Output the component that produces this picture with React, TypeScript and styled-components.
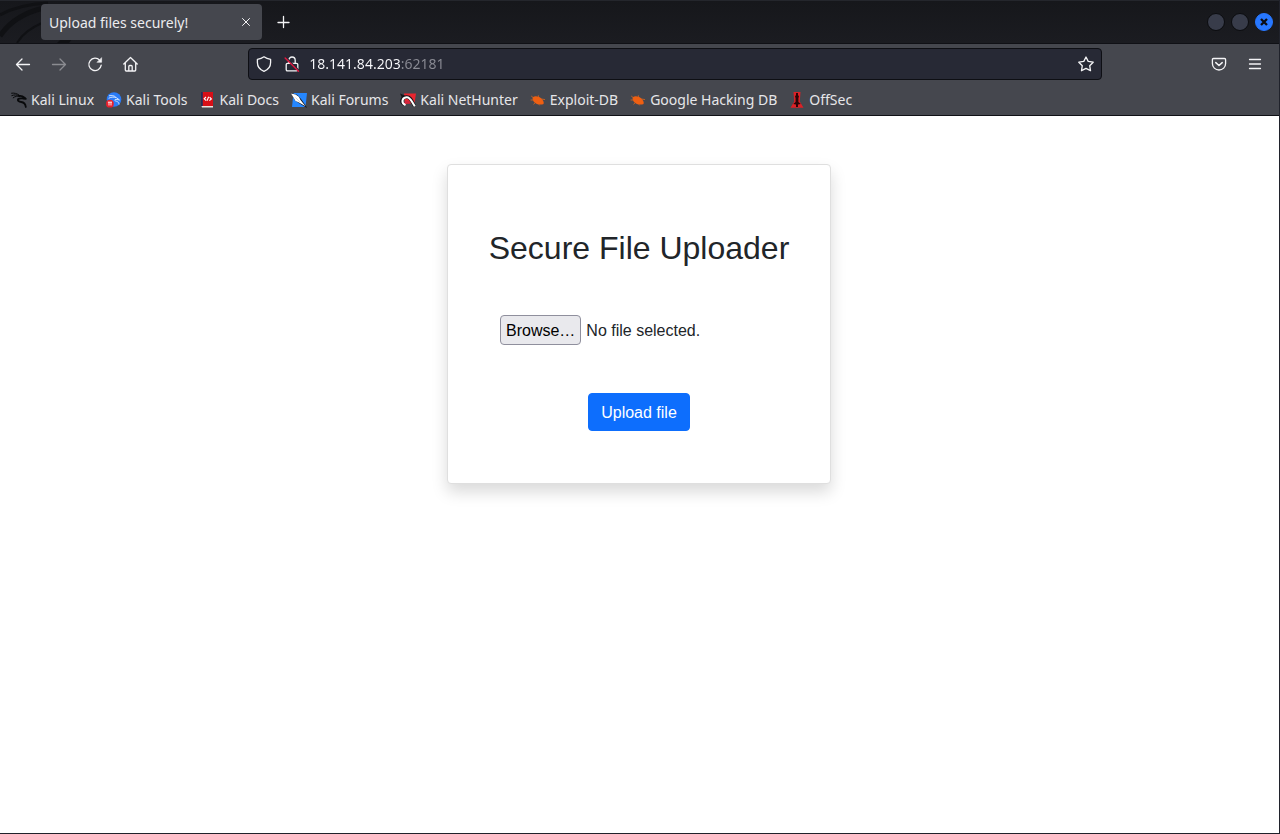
import React, { useState } from "react";
import styled, { createGlobalStyle } from "styled-components";

const GlobalStyle = createGlobalStyle`
  * { box-sizing: border-box; }
  body { margin: 0; background: #fff; }
`;

const uiFont = `"Noto Sans", sans-serif`;
const pageFont = `"Liberation Sans", Arial, sans-serif`;

const Window = styled.div`
  min-height: 100vh;
  display: flex;
  flex-direction: column;
  border-right: 1px solid #20222b;
  border-bottom: 1px solid #20222b;
  background: #fff;
  font-family: ${uiFont};
`;

const TitleBar = styled.header`
  position: relative;
  display: flex;
  align-items: center;
  height: 44px;
  padding: 0 6px 0 41px;
  border-top: 1px solid #24262c;
  border-bottom: 1px solid #101116;
  background: linear-gradient(#16171b, #1b1c21);
`;

const TitleArt = styled.svg`
  position: absolute;
  left: 0;
  top: 0;
`;

const Tab = styled.div`
  position: relative;
  display: flex;
  align-items: center;
  justify-content: space-between;
  width: 221px;
  height: 36px;
  padding: 0 8px;
  border-radius: 4px;
  background: #45474e;
  color: #ececee;
  font-size: 14px;
  line-height: 20px;
`;

const TabTitle = styled.span`
  padding-top: 2px;
`;

const IconButton = styled.button<{ $size?: number }>`
  display: flex;
  align-items: center;
  justify-content: center;
  flex: none;
  width: ${(p) => p.$size ?? 36}px;
  height: ${(p) => p.$size ?? 36}px;
  padding: 0;
  border: 0;
  border-radius: 4px;
  background: none;
  color: #f4f4f6;
  &:disabled { color: #8b8c91; }
`;

const NewTab = styled(IconButton)`
  margin-left: 4px;
`;

const WindowControls = styled.div`
  display: flex;
  gap: 6px;
  margin-left: auto;
`;

const ControlDot = styled.button<{ $close?: boolean }>`
  display: flex;
  align-items: center;
  justify-content: center;
  width: 18px;
  height: 18px;
  padding: 0;
  border: 1px solid ${(p) => (p.$close ? "#2777ff" : "#0b0c0f")};
  border-radius: 50%;
  background: ${(p) => (p.$close ? "#2777ff" : "#383c4a")};
  color: #0b0c12;
`;

const Toolbar = styled.nav`
  display: flex;
  align-items: center;
  height: 40px;
  padding: 0 6px 0 5px;
  background: #45474e;
`;

const Spring = styled.div`
  flex: 7 1 0;
`;

const AddressBar = styled.form`
  flex: 60 1 0;
  display: flex;
  align-items: center;
  height: 32px;
  border: 1px solid #0e0f14;
  border-radius: 4px;
  background: #272935;
`;

const AddressInput = styled.input`
  flex: 1;
  min-width: 0;
  margin-left: 4px;
  padding: 0;
  border: 0;
  outline: 0;
  background: linear-gradient(to right, #fbfbfe 92px, #8b8c95 92px);
  background-clip: text;
  -webkit-background-clip: text;
  color: transparent;
  font-family: ${uiFont};
  font-size: 14px;
  line-height: 20px;
`;

const Bookmarks = styled.nav`
  display: flex;
  align-items: center;
  gap: 12px;
  height: 32px;
  padding: 0 11px;
  border-bottom: 1px solid #101116;
  background: #45474e;
`;

const Bookmark = styled.a`
  display: flex;
  align-items: center;
  gap: 4px;
  color: #e6e6e9;
  font-size: 14px;
  line-height: 20px;
  text-decoration: none;
  white-space: nowrap;
`;

const Page = styled.main`
  flex: 1;
  display: flex;
  flex-direction: column;
  align-items: center;
  padding: 48px 1px 48px 0;
  color: #212529;
  font-family: ${pageFont};
  font-size: 16px;
  line-height: 24px;
`;

const Card = styled.form`
  display: flex;
  flex-direction: column;
  align-items: center;
  gap: 48px;
  width: 30%;
  min-width: 384px;
  padding: 64px 16px 52px;
  border: 1px solid #dfdfdf;
  border-radius: 4px;
  background: #fff;
  box-shadow: 0 8px 16px rgba(0, 0, 0, 0.15);
`;

const Title = styled.h1`
  margin: 0;
  font-size: 32px;
  font-weight: 400;
  line-height: 38px;
`;

const FilePicker = styled.label`
  position: relative;
  display: flex;
  align-items: center;
  gap: 5px;
  width: 278px;
`;

const FileInput = styled.input`
  position: absolute;
  inset: 0;
  width: 100%;
  opacity: 0;
`;

const BrowseFace = styled.span`
  padding: 3px 5px 1px;
  border: 1px solid #8f8f9d;
  border-radius: 4px;
  background: #e9e9ed;
  color: #000;
`;

const FileName = styled.span`
  padding-top: 2px;
`;

const UploadButton = styled.button`
  padding: 7px 12px 5px;
  border: 1px solid #0d6efd;
  border-radius: 4px;
  background: #0d6efd;
  color: #fff;
  font: inherit;
`;

const Glyph = ({ children, size = 16 }: { children: React.ReactNode; size?: number }) => (
  <svg
    width={size}
    height={size}
    viewBox="0 0 16 16"
    fill="none"
    stroke="currentColor"
    strokeWidth="1.3"
    strokeLinecap="round"
    strokeLinejoin="round"
    aria-hidden="true"
  >
    {children}
  </svg>
);

const Dragon = ({ color }: { color: string }) => (
  <g fill="none" stroke={color} strokeLinecap="round" strokeLinejoin="round">
    <path d="M.6 1.200C3 .8 6 1.400 8.300 3.200M.8 3.600C3 2.600 6 2.700 8.500 3.800M2.200 5.800C4 4.300 6.500 3.800 9 4.200" strokeWidth="1" />
    <path d="M8 4C10 3.600 12 4.300 13.600 5.600L14.800 6.800L12.200 6.500C10.500 6.300 8.500 5.800 7.200 7C6.200 8.600 8 9.800 10.200 10C13 10.300 14.500 12 14.800 15" strokeWidth="1.800" />
  </g>
);

const Bug = () => (
  <>
    <path d="M2.800 5.200C5 3.600 9 4.300 11.200 6.300C13.200 8 14.300 10.500 13.500 12C11 13.200 6 12.500 4 10C2.800 8.500 2.200 6.500 2.800 5.200Z" fill="#ee5f12" />
    <path d="M3.500 5.800L1.200 4M8.500 4.800L8.300 3.300M3.200 8L.6 8M5 11L3.500 12.300M11.500 7L15 7.600M9 12.500L9.500 13.300" stroke="#d9661f" strokeWidth=".8" fill="none" />
  </>
);

const bookmarks: { name: string; art: React.ReactNode }[] = [
  { name: "Kali Linux", art: <Dragon color="#08090b" /> },
  {
    name: "Kali Tools",
    art: (
      <>
        <circle cx="8" cy="7.500" r="7.300" fill="#2a7cf7" />
        <path d="M3 3.800C6 3.200 8 3.800 9.500 4.800M2.600 6.300C5.500 4.600 8.500 5 10.500 5.700L13.500 8L10 7.300C8 7.500 8.500 9 10.500 9.300C12 9.700 13 10.800 13 12.500" stroke="#cfe2ff" strokeWidth="1" fill="none" />
        <circle cx="3.900" cy="11.700" r="3.900" fill="#e8202c" />
        <path d="M3 10.300V13.500M5 10.300V13.500M1.900 10.200H6" stroke="#fff" strokeWidth=".9" />
      </>
    ),
  },
  {
    name: "Kali Docs",
    art: (
      <>
        <path d="M1 0H13V14H1Z" fill="#d80f17" />
        <path d="M1 0H2.800V14H1Z" fill="#252c58" />
        <path d="M1.500 14H13V15.600H2Z" fill="#eee1df" />
        <path d="M6 5L4.200 6.800L6.200 8.500M9.600 5.200L11.400 7L9.400 8.700M8.700 4.800L7 8.800" stroke="#fff" strokeWidth="1.100" fill="none" />
      </>
    ),
  },
  {
    name: "Kali Forums",
    art: (
      <>
        <path d="M2.500 1H16L14.500 15H1Z" fill="#2587ff" />
        <path d="M0 1L6 2.800L10 7L15 14L16 16L11 13L4 8.500Z" fill="#14161b" />
        <path d="M0 1.500L4.500 2.500L7.800 4.700L9.500 8L14.500 14.300L7.500 10.300L4.500 8.900L2.500 5.500Z" fill="#fff" />
        <path d="M4.500 5.500L9 10" stroke="#b9c2cf" strokeWidth=".7" />
      </>
    ),
  },
  {
    name: "Kali NetHunter",
    art: (
      <>
        <path d="M4 1.500H16L14.500 11L5 12Z" fill="#e9252f" />
        <path d="M0 1.500L5 3.500L2 6Z" fill="#17191d" />
        <path d="M4.800 12.500C0 10.500 1.500 5.500 6.300 5C10.500 4.500 12 9.500 14.500 14" stroke="#15171b" strokeWidth="3.400" fill="none" />
        <path d="M4.500 12.500C5.500 9.500 7.500 8.500 9.500 11.500" stroke="#cf2540" strokeWidth="2" fill="none" />
        <path d="M5.500 13.200C.8 11 1.800 5.800 6.500 5.300C10.500 5 11.500 9.500 14.800 14.300" stroke="#fff" strokeWidth="2" fill="none" strokeLinejoin="round" />
      </>
    ),
  },
  { name: "Exploit-DB", art: <Bug /> },
  { name: "Google Hacking DB", art: <Bug /> },
  {
    name: "OffSec",
    art: (
      <>
        <path d="M4.500 0H11.500L10.800 9.500L14.500 15.700H1.500L5.200 9.500Z" fill="#dc2126" />
        <path d="M7 1H9V3L10 4.500L9.400 6V10L11.800 12L9 12.500V15H7V12.500L4.200 12L6.600 10V6L6 4.500L7 3Z" fill="#2a0508" />
      </>
    ),
  },
];

export default function App() {
  const [address, setAddress] = useState("18.141.84.203:62181");
  const [fileName, setFileName] = useState("No file selected.");

  return (
    <>
      <GlobalStyle />
      <Window>
        <TitleBar>
          <TitleArt width="120" height="42" viewBox="0 0 120 42" fill="none" stroke="#101114" aria-hidden="true">
            <path d="M0 14C14 6 28 3 48 2" strokeWidth="3" />
            <path d="M0 35C8 23 22 12 44 7" strokeWidth="5" />
            <path d="M17 42C22 33 30 27 44 21" strokeWidth="2" />
            <path d="M57 42L61 38H72L69 42Z" fill="#101114" stroke="none" />
          </TitleArt>
          <Tab>
            <TabTitle>Upload files securely!</TabTitle>
            <IconButton $size={16} aria-label="Close tab">
              <Glyph><path d="M4.500 4.500L11.500 11.500M11.500 4.500L4.500 11.500" strokeWidth="1" /></Glyph>
            </IconButton>
          </Tab>
          <NewTab aria-label="New tab">
            <Glyph><path d="M7.500 2.500V13.500M2 8.500H13" /></Glyph>
          </NewTab>
          <WindowControls>
            <ControlDot aria-label="Minimize" />
            <ControlDot aria-label="Maximize" />
            <ControlDot $close aria-label="Close">
              <Glyph><path d="M5 5L11 11M11 5L5 11" strokeWidth="2.300" strokeLinecap="butt" /></Glyph>
            </ControlDot>
          </WindowControls>
        </TitleBar>

        <Toolbar aria-label="Navigation">
          <IconButton aria-label="Back">
            <Glyph><path d="M14.500 8.500H1.500M7 3L1.500 8.500L7 14" /></Glyph>
          </IconButton>
          <IconButton aria-label="Forward" disabled>
            <Glyph><path d="M1.500 8.500H14.500M9 3L14.500 8.500L9 14" /></Glyph>
          </IconButton>
          <IconButton aria-label="Reload">
            <Glyph>
              <path d="M12.800 4.400A6.200 6.200 0 1 0 14.200 9.200" />
              <path d="M14.600 2V6.300H10.300Z" fill="currentColor" strokeWidth=".6" />
            </Glyph>
          </IconButton>
          <IconButton aria-label="Home">
            <Glyph>
              <path d="M.8 8L7.500 1.500L14.200 8M2.300 7V14Q2.300 15 3.300 15H11.700Q12.700 15 12.700 14V7M5.800 15V10.500Q5.800 9.500 6.800 9.500H8.200Q9.200 9.500 9.200 10.500V15" />
            </Glyph>
          </IconButton>
          <Spring />
          <AddressBar onSubmit={(e) => e.preventDefault()}>
            <IconButton type="button" $size={30} aria-label="Tracking protection">
              <Glyph>
                <path d="M8 .8C10 2.300 12 3 14.600 3.400V6.500C14.600 10.500 12 13.800 8 15.300C4 13.800 1.400 10.500 1.400 6.500V3.400C4 3 6 2.300 8 .8Z" />
              </Glyph>
            </IconButton>
            <IconButton type="button" $size={26} aria-label="Connection not secure">
              <Glyph>
                <path d="M4.800 7V4.200A3.200 3.200 0 0 1 11.200 4.200V7M3.500 7.300H12.500Q13.800 7.300 13.800 8.500V13.500Q13.800 14.900 12.500 14.900H3.500Q2.200 14.900 2.200 13.500V8.500Q2.200 7.300 3.500 7.300Z" />
                <path d="M2.500 2L15.500 15" stroke="#272935" strokeWidth="1.500" />
                <path d="M1.200 2L14.500 15.300" stroke="#e0173f" strokeWidth="1.400" />
              </Glyph>
            </IconButton>
            <AddressInput aria-label="Address" value={address} onChange={(e) => setAddress(e.target.value)} />
            <IconButton type="button" $size={30} aria-label="Bookmark this page">
              <Glyph>
                <path d="M8 1L10.200 5.400L15.200 6.200L11.700 9.700L12.500 14.700L8 12.400L3.500 14.700L4.300 9.700L.8 6.200L5.800 5.400Z" />
              </Glyph>
            </IconButton>
          </AddressBar>
          <Spring />
          <IconButton aria-label="Save to Pocket">
            <Glyph>
              <path d="M2.500 2.500H13.500Q14.600 2.500 14.600 3.700V7.500C14.600 11.200 11.700 14 8 14C4.300 14 1.400 11.200 1.400 7.500V3.700Q1.400 2.500 2.500 2.500Z" />
              <path d="M4.800 6.600L8 9.500L11.200 6.600" strokeWidth="1.500" />
            </Glyph>
          </IconButton>
          <IconButton aria-label="Menu">
            <Glyph><path d="M2.500 3.500H13.500M2.500 8H13.500M2.500 12.500H13.500" /></Glyph>
          </IconButton>
        </Toolbar>

        <Bookmarks aria-label="Bookmarks">
          {bookmarks.map((b) => (
            <Bookmark key={b.name} href="#">
              <svg width="16" height="16" viewBox="0 0 16 16" aria-hidden="true">{b.art}</svg>
              {b.name}
            </Bookmark>
          ))}
        </Bookmarks>

        <Page>
          <Card onSubmit={(e) => e.preventDefault()}>
            <Title>Secure File Uploader</Title>
            <FilePicker>
              <FileInput
                type="file"
                aria-label="File to upload"
                onChange={(e) => setFileName(e.target.files?.[0]?.name ?? "No file selected.")}
              />
              <BrowseFace>Browse…</BrowseFace>
              <FileName>{fileName}</FileName>
            </FilePicker>
            <UploadButton type="submit">Upload file</UploadButton>
          </Card>
        </Page>
      </Window>
    </>
  );
}
